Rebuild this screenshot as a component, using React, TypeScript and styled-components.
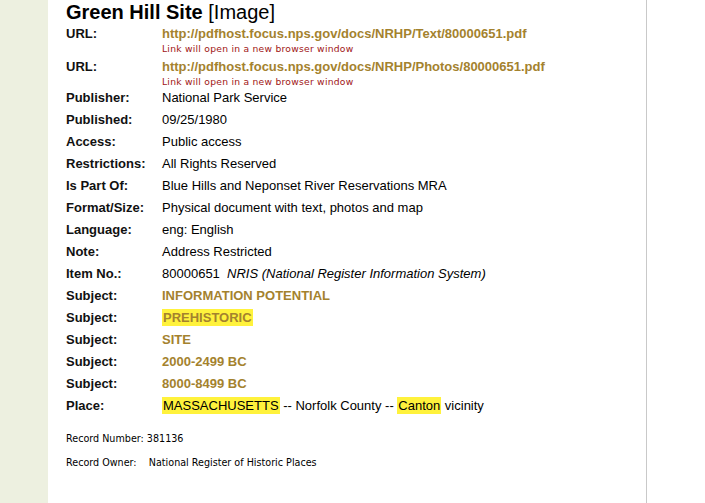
import React from "react";
import styled, { createGlobalStyle } from "styled-components";

const Global = createGlobalStyle`
  html, body { margin: 0; padding: 0; background: #ffffff; }
  body { font-family: "Liberation Sans", Arial, sans-serif; color: #000; }
`;

const Page = styled.div`
  display: flex;
  min-height: 503px;
  background: #fff;
`;

const Sidebar = styled.div`
  width: 48px;
  flex: none;
  background: #edf0e0;
`;

const Main = styled.main`
  flex: none;
  border-right: 1px solid #c9c9c9;
  padding-left: 18px;
  box-sizing: border-box;
  width: 599px;
`;

const Title = styled.h1`
  margin: 0 0 1px;
  font-size: 20px;
  line-height: 24px;
  font-weight: bold;
  color: #000;
`;

const TitleSuffix = styled.span`
  font-weight: normal;
`;

const Row = styled.div<{ $gap?: number }>`
  display: grid;
  grid-template-columns: 96px 1fr;
  font-size: 13px;
  line-height: 22px;
  margin-bottom: ${(p) => p.$gap ?? 0}px;
`;

const Label = styled.div<{ $lh?: number }>`
  font-weight: bold;
  color: #111;
  line-height: ${(p) => p.$lh ?? 22}px;
`;

const Value = styled.div`
  color: #000;
`;

const UrlLink = styled.a`
  display: block;
  font-weight: bold;
  color: #a4822e;
  text-decoration: none;
  line-height: 18px;
`;

const Note = styled.div`
  font-family: "DejaVu Sans", Verdana, sans-serif;
  font-size: 9.2px;
  letter-spacing: 0.25px;
  line-height: 11px;
  color: #a01515;
`;

const SubjectLink = styled.a`
  font-weight: bold;
  color: #a4822e;
  text-decoration: none;
`;

const Mark = styled.span`
  background: #fff23c;
  padding: 1px 1px;
`;

const Italic = styled.i``;

const Footer = styled.div`
  margin-top: 10px;
  font-family: "DejaVu Sans", Verdana, sans-serif;
  font-size: 9.6px;
  line-height: 24px;
  color: #000;
  white-space: pre;
`;

type Item = { label: string; value: React.ReactNode };

const rows: Item[] = [
  { label: "Publisher:", value: "National Park Service" },
  { label: "Published:", value: "09/25/1980" },
  { label: "Access:", value: "Public access" },
  { label: "Restrictions:", value: "All Rights Reserved" },
  { label: "Is Part Of:", value: "Blue Hills and Neponset River Reservations MRA" },
  { label: "Format/Size:", value: "Physical document with text, photos and map" },
  { label: "Language:", value: "eng: English" },
  { label: "Note:", value: "Address Restricted" },
  {
    label: "Item No.:",
    value: (
      <>
        80000651&nbsp;&nbsp;<Italic>NRIS (National Register Information System)</Italic>
      </>
    ),
  },
  { label: "Subject:", value: <SubjectLink href="#">INFORMATION POTENTIAL</SubjectLink> },
  {
    label: "Subject:",
    value: (
      <SubjectLink href="#">
        <Mark>PREHISTORIC</Mark>
      </SubjectLink>
    ),
  },
  { label: "Subject:", value: <SubjectLink href="#">SITE</SubjectLink> },
  { label: "Subject:", value: <SubjectLink href="#">2000-2499 BC</SubjectLink> },
  { label: "Subject:", value: <SubjectLink href="#">8000-8499 BC</SubjectLink> },
  {
    label: "Place:",
    value: (
      <>
        <Mark>MASSACHUSETTS</Mark> -- Norfolk County -- <Mark>Canton</Mark> vicinity
      </>
    ),
  },
];

const urls = [
  "http://pdfhost.focus.nps.gov/docs/NRHP/Text/80000651.pdf",
  "http://pdfhost.focus.nps.gov/docs/NRHP/Photos/80000651.pdf",
];

export default function App() {
  return (
    <Page>
      <Global />
      <Sidebar />
      <Main>
        <Title>
          Green Hill Site <TitleSuffix>[Image]</TitleSuffix>
        </Title>
        {urls.map((u, i) => (
          <Row key={u} $gap={i === 0 ? 4 : 0}>
            <Label $lh={18}>URL:</Label>
            <Value>
              <UrlLink href="#">{u}</UrlLink>
              <Note>Link will open in a new browser window</Note>
            </Value>
          </Row>
        ))}
        {rows.map((r, i) => (
          <Row key={i}>
            <Label>{r.label}</Label>
            <Value>{r.value}</Value>
          </Row>
        ))}
        <Footer>
          <div>Record Number: 381136</div>
          <div>{"Record Owner:    National Register of Historic Places"}</div>
        </Footer>
      </Main>
    </Page>
  );
}
